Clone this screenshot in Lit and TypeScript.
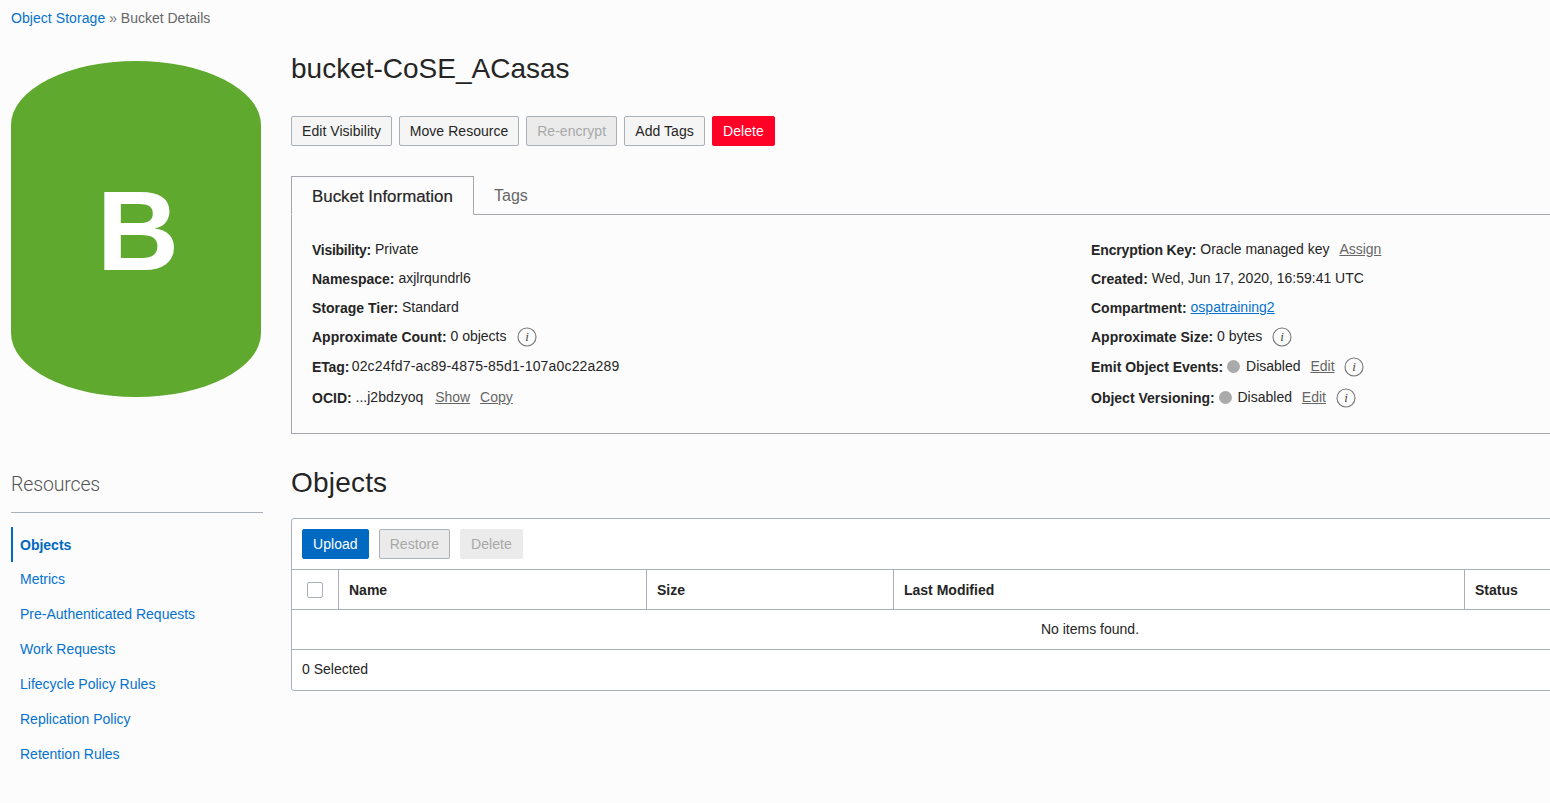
import { LitElement, css, html } from "lit";
import { customElement } from "lit/decorators.js";

const infoIcon = html`<svg class="info" width="20" height="20" viewBox="0 0 20 20">
  <circle cx="10" cy="10" r="9" fill="none" stroke="#757575" stroke-width="1.1"></circle>
  <text x="10" y="14" text-anchor="middle" font-family="Liberation Serif" font-style="italic" font-size="13" fill="#444">i</text>
</svg>`;

const resources = [
  "Objects",
  "Metrics",
  "Pre-Authenticated Requests",
  "Work Requests",
  "Lifecycle Policy Rules",
  "Replication Policy",
  "Retention Rules",
];

/**
 * Bucket details page.
 */
@customElement("app-root")
export default class AppRoot extends LitElement {
  private renderLeftInfo() {
    return html`
      <div class="col">
        <div class="row"><b class="tight">Visibility:</b> Private</div>
        <div class="row"><b>Namespace:</b> axjlrqundrl6</div>
        <div class="row"><b>Storage Tier:</b> Standard</div>
        <div class="row"><b>Approximate Count:</b> 0 objects ${infoIcon}</div>
        <div class="row drop"><b class="snug">ETag:</b> <span class="hash">02c24fd7-ac89-4875-85d1-107a0c22a289</span></div>
        <div class="row low">
          <b>OCID:</b> ...j2bdzyoq
          <a class="action first">Show</a>
          <a class="action">Copy</a>
        </div>
      </div>
    `;
  }

  private renderRightInfo() {
    return html`
      <div class="col">
        <div class="row"><b class="snug">Encryption Key:</b> Oracle managed key <a class="action">Assign</a></div>
        <div class="row"><b>Created:</b> Wed, Jun 17, 2020, 16:59:41 UTC</div>
        <div class="row"><b>Compartment:</b> <a class="link">ospatraining2</a></div>
        <div class="row"><b>Approximate Size:</b> 0 bytes ${infoIcon}</div>
        <div class="row drop">
          <b>Emit Object Events:</b> <span class="dot"></span> Disabled
          <a class="action">Edit</a> ${infoIcon}
        </div>
        <div class="row low">
          <b>Object Versioning:</b> <span class="dot"></span> Disabled
          <a class="action">Edit</a> ${infoIcon}
        </div>
      </div>
    `;
  }

  protected override render() {
    return html`
      <div class="crumbs"><a>Object Storage</a> <span class="sep">»</span> Bucket Details</div>
      <div class="page">
        <aside>
          <div class="bucket">B</div>
          <h3>Resources</h3>
          <nav>
            ${resources.map((r, i) => html`<a class=${i === 0 ? "active" : ""}>${r}</a>`)}
          </nav>
        </aside>
        <main>
          <h1>bucket-CoSE_ACasas</h1>
          <div class="buttons">
            <button>Edit Visibility</button>
            <button>Move Resource</button>
            <button class="disabled">Re-encrypt</button>
            <button class="wide">Add Tags</button>
            <button class="danger">Delete</button>
          </div>
          <div class="tabs">
            <div class="tab on">Bucket Information</div>
            <div class="tab">Tags</div>
          </div>
          <section class="details">${this.renderLeftInfo()}${this.renderRightInfo()}</section>
          <h2>Objects</h2>
          <div class="table">
            <div class="toolbar">
              <button class="primary">Upload</button>
              <button class="disabled outline">Restore</button>
              <button class="disabled flat">Delete</button>
            </div>
            <div class="head">
              <div class="cell check"><span class="box"></span></div>
              <div class="cell name">Name</div>
              <div class="cell size">Size</div>
              <div class="cell modified">Last Modified</div>
              <div class="cell status">Status</div>
            </div>
            <div class="empty">No items found.</div>
            <div class="foot">0 Selected</div>
          </div>
        </main>
      </div>
    `;
  }

  static override styles = css`
    :host {
      display: block;
      width: 1550px;
      height: 803px;
      overflow: hidden;
      background: #fcfcfc;
      color: #252525;
      font-family: "Liberation Sans", Arial, sans-serif;
      font-size: 14px;
    }
    a {
      color: #0572ce;
    }
    .crumbs {
      padding: 10px 11px 0;
      height: 26px;
      line-height: 17px;
      color: #666;
      box-sizing: border-box;
    }
    .crumbs a {
      letter-spacing: 0.06px;
    }
    .sep {
      color: #777;
    }
    .page {
      display: flex;
      width: 1889px;
    }
    aside {
      flex: none;
      width: 252px;
      margin: 0 28px 0 11px;
      padding-top: 35px;
    }
    .bucket {
      width: 250px;
      height: 336px;
      padding-left: 4px;
      padding-top: 2px;
      box-sizing: border-box;
      background: #5fa92f;
      border-radius: 125px / 64px;
      color: #fff;
      font-size: 114px;
      font-weight: bold;
      display: flex;
      align-items: center;
      justify-content: center;
    }
    h3 {
      margin: 75px 0 0;
      padding-bottom: 15px;
      height: 25px;
      line-height: 25px;
      font-family: Roboto, "Liberation Sans", sans-serif;
      font-size: 19.5px;
      letter-spacing: -0.15px;
      font-weight: 300;
      color: #555;
      border-bottom: 1px solid #aab0b8;
    }
    nav {
      display: flex;
      flex-direction: column;
      margin-top: 14px;
    }
    nav a {
      height: 35px;
      line-height: 34px;
      padding-left: 9px;
      box-sizing: border-box;
    }
    nav a.active {
      font-weight: bold;
      color: #0069c2;
      border-left: 2px solid #0069c2;
      padding-left: 7px;
      line-height: 36px;
    }
    main {
      flex: 1;
      min-width: 0;
    }
    h1 {
      margin: 0;
      padding-top: 23px;
      height: 68px;
      box-sizing: border-box;
      font-size: 28px;
      line-height: 40px;
      font-weight: normal;
    }
    .buttons {
      display: flex;
      gap: 6.7px;
      margin-top: 22px;
    }
    .toolbar {
      display: flex;
      gap: 10px;
      padding: 10px;
      height: 50px;
      box-sizing: border-box;
    }
    button {
      height: 30px;
      padding: 0 10px;
      font: inherit;
      letter-spacing: 0.05px;
      color: #252525;
      background: #f5f5f5;
      border: 1px solid #aab0b8;
      border-radius: 2px;
    }
    button.wide {
      padding: 0 10.5px;
    }
    button.disabled {
      color: #a8a8a8;
      background: #ebebeb;
    }
    button.flat {
      border-color: #ebebeb;
    }
    button.danger {
      background: #ff0026;
      border-color: #ff0026;
      color: #fff;
    }
    button.primary {
      background: #0069c2;
      border-color: #0069c2;
      color: #fff;
    }
    .tabs {
      display: flex;
      margin-top: 30px;
      height: 38px;
      border-bottom: 1px solid #a3a7ab;
      font-size: 16px;
    }
    .tab {
      padding: 0 20px;
      line-height: 40px;
      height: 38px;
      color: #666;
    }
    .tab.on {
      width: 183px;
      height: 39px;
      box-sizing: border-box;
      color: #252525;
      font-size: 16.9px;
      line-height: 39px;
      -webkit-text-stroke: 0.2px #252525;
      background: #fcfcfc;
      border: 1px solid #a3a7ab;
      border-bottom: 1px solid #fcfcfc;
    }
    .details {
      display: grid;
      grid-template-columns: 779px 1fr;
      padding: 20px 20px 0;
      border: 1px solid #a3a7ab;
      border-top: 0;
      height: 219px;
      box-sizing: border-box;
    }
    .row {
      height: 29px;
      line-height: 29px;
      white-space: nowrap;
    }
    .row.low {
      margin-top: 2px;
    }
    .row.drop {
      margin-top: 1px;
    }
    b {
      font-weight: bold;
      vertical-align: -1px;
    }
    b.tight {
      letter-spacing: -0.27px;
    }
    b.snug {
      letter-spacing: -0.13px;
    }
    .hash {
      letter-spacing: 0.17px;
      margin-left: -1.4px;
    }
    .action {
      color: #666;
      text-decoration: underline;
      margin-left: 6px;
    }
    .action.first {
      margin-left: 8px;
    }
    .link {
      text-decoration: underline;
    }
    .info {
      margin-left: 7px;
      vertical-align: middle;
    }
    .col + .col .info {
      margin-left: 6px;
    }
    .dot {
      display: inline-block;
      width: 13px;
      height: 13px;
      border-radius: 50%;
      background: #aaa;
      margin-right: 2px;
      vertical-align: -2px;
    }
    h2 {
      margin: 0;
      height: 84px;
      padding-top: 29px;
      box-sizing: border-box;
      font-size: 28px;
      letter-spacing: 0.2px;
      line-height: 40px;
      font-weight: normal;
    }
    .table {
      background: #fff;
      border: 1px solid #aab0b8;
      border-radius: 3px;
    }
    .head {
      display: flex;
      height: 41px;
      box-sizing: border-box;
      border-top: 1px solid #aab0b8;
      border-bottom: 1px solid #aab0b8;
      font-weight: bold;
    }
    .cell {
      display: flex;
      align-items: center;
      padding: 0 10px;
      box-sizing: border-box;
      border-right: 1px solid #aab0b8;
    }
    .check {
      width: 47px;
      justify-content: center;
    }
    .box {
      width: 16px;
      height: 16px;
      box-sizing: border-box;
      background: #fff;
      border: 1px solid #aab0b8;
      border-radius: 2px;
    }
    .name {
      width: 308px;
    }
    .size {
      width: 247px;
    }
    .modified {
      width: 571px;
    }
    .status {
      flex: 1;
      border-right: 0;
    }
    .empty {
      height: 40px;
      line-height: 39px;
      text-align: center;
      border-bottom: 1px solid #aab0b8;
      box-sizing: border-box;
    }
    .foot {
      height: 40px;
      line-height: 39px;
      padding-left: 10px;
    }
  `;
}
